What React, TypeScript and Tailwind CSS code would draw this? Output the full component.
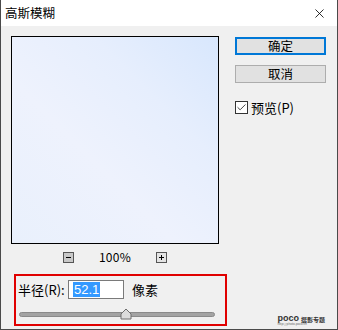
import { X, Check } from 'lucide-react';

const font = { fontFamily: '"Microsoft YaHei", "Noto Sans CJK SC", "Liberation Sans", sans-serif' };

const App = () => {
    return (
        <div className="relative w-[338px] h-[330px] bg-[#f0f0f0] border-x border-b border-[#4a4a4a] text-black overflow-hidden" style={font}>
            {/* Title bar */}
            <div className="flex items-center justify-between h-[26px] bg-white pl-[4px] pr-[8px]">
                <span className="text-[12.5px] leading-none">高斯模糊</span>
                <X className="w-[15px] h-[15px] mr-[2px]" strokeWidth={1.3} />
            </div>

            <div className="flex pl-[10px] pt-[10px]">
                {/* Left column */}
                <div className="flex flex-col w-[217px]">
                    <div className="w-[208px] h-[208px] border border-black bg-[linear-gradient(225deg,#d8e7fd_0%,#e6eefd_30%,#eef2fd_60%,#e9f0fc_100%)]" />

                    <div className="flex items-center justify-center gap-[25px] w-[208px] h-[18px] mt-[4px]">
                        <div className="flex items-center justify-center w-[11px] h-[11px] border border-[#555] bg-[#c8c8c8]">
                            <div className="w-[5px] h-px bg-black" />
                        </div>
                        <span className="text-[12px] leading-none tracking-[0.3px]">100%</span>
                        <div className="relative flex items-center justify-center w-[11px] h-[11px] border border-[#555] bg-[#e4e4e4]">
                            <div className="w-[5px] h-px bg-black" />
                            <div className="absolute w-px h-[5px] bg-black" />
                        </div>
                    </div>

                    {/* Radius box */}
                    <div className="ml-[3px] mt-[8px] w-[213px] h-[52px] border-2 border-[#e00000] px-[2px] pt-[4px]">
                        <div className="flex items-center h-[19px]">
                            <span className="text-[13px] leading-none w-[50px]">半径(R):</span>
                            <div className="flex items-center w-[56px] h-[19px] border border-[#7a7a7a] bg-white pl-[4px]">
                                <span className="bg-[#3399ff] text-white text-[13px] leading-[15px] px-px" style={{ fontFamily: '"Liberation Sans", sans-serif' }}>52.1</span>
                            </div>
                            <span className="text-[13px] leading-none ml-[8px]">像素</span>
                        </div>
                        <div className="relative mt-[9px] h-[12px]">
                            <div className="absolute left-[1px] top-[4px] w-[196px] h-[5px] rounded-full bg-[#a3a3a3] border border-[#8a8a8a]" />
                            <svg className="absolute left-[102px] top-0" width="12" height="12" viewBox="0 0 12 12">
                                <path d="M1 11 V6 L6 1 L11 6 V11 Z" fill="#dcdcdc" stroke="#6e6e6e" strokeWidth="1" />
                            </svg>
                        </div>
                    </div>
                </div>

                {/* Right column */}
                <div className="flex flex-col ml-[7px] pt-px">
                    <button className="flex items-center justify-center w-[91px] h-[18px] border-2 border-[#0078d7] bg-[#e1e1e1] text-[12.5px] leading-none">
                        确定
                    </button>
                    <button className="flex items-center justify-center w-[91px] h-[18px] mt-[10px] border border-[#adadad] bg-[#e1e1e1] text-[12.5px] leading-none">
                        取消
                    </button>
                    <label className="flex items-center gap-[3px] mt-[18px]">
                        <span className="flex items-center justify-center w-[13px] h-[13px] border border-[#333] bg-white">
                            <Check className="w-[11px] h-[11px]" strokeWidth={1.6} />
                        </span>
                        <span className="text-[13px] leading-none">预览(P)</span>
                    </label>
                </div>
            </div>

            {/* watermark */}
            <div className="absolute right-[12px] bottom-[3px] flex flex-col items-start leading-none">
                <div className="flex items-end gap-[2px]">
                    <span className="text-[9px] font-bold text-[#333]" style={{ fontFamily: '"Liberation Sans", sans-serif' }}>poco</span>
                    <span className="text-[6px] font-bold text-[#333]">摄影专题</span>
                </div>
                <span className="text-[3px] text-[#666]">http://photo.poco.cn</span>
            </div>
        </div>
    );
};

export default App;
